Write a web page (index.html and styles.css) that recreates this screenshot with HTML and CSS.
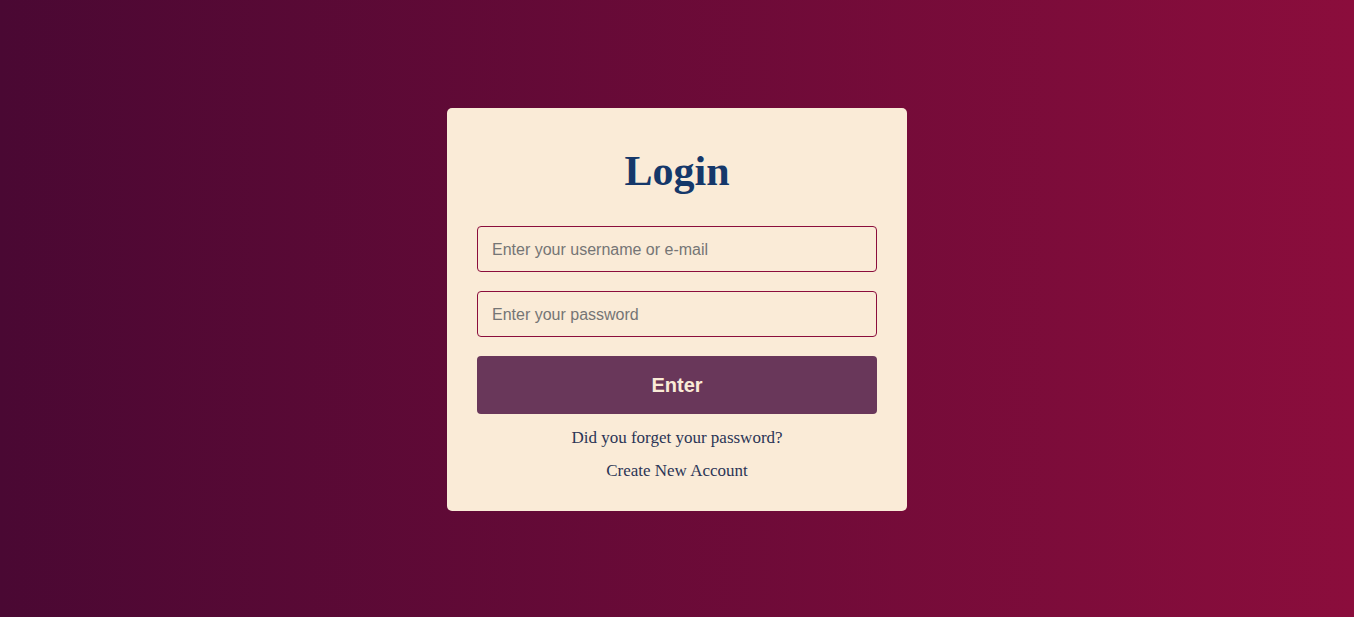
FILE: index.html
```html
<!DOCTYPE html>
<html lang="en">
<head>
<meta charset="utf-8">
<title>Login</title>
<link rel="stylesheet" href="styles.css">
</head>
<body>
<main class="page">
  <form class="card">
    <h1 class="title">Login</h1>
    <input class="field" type="text" placeholder="Enter your username or e-mail">
    <input class="field" type="password" placeholder="Enter your password">
    <button class="btn" type="button">Enter</button>
    <div class="links">
      <a class="link" href="#">Did you forget your password?</a>
      <a class="link" href="#">Create New Account</a>
    </div>
  </form>
</main>
</body>
</html>
```
FILE: styles.css
```css
html, body {
  margin: 0;
  height: 100%;
}
body {
  background: linear-gradient(90deg, #4a0833 0%, #8b0d3c 100%);
  font-family: "Liberation Serif", "Times New Roman", serif;
}
.page {
  height: 100%;
  display: flex;
  align-items: center;
  justify-content: center;
}
.card {
  width: 400px;
  padding: 30px 30px 28px;
  background: #faebd7;
  border-radius: 5px;
  display: flex;
  flex-direction: column;
  margin-top: 1px;
}
.title {
  margin: 7px 0 28px;
  text-align: center;
  font-size: 42px;
  line-height: 53px;
  font-weight: bold;
  color: #15386a;
}
.field {
  box-sizing: border-box;
  height: 46px;
  width: 100%;
  margin: 0 0 19px;
  padding: 2px 14px 0;
  border: 1px solid #8b0d3c;
  border-radius: 4px;
  background: #faebd7;
  font-family: "Liberation Sans", Arial, sans-serif;
  font-size: 16px;
  color: #333;
  outline: none;
}
.field::placeholder {
  color: #757575;
}
.btn {
  height: 58px;
  width: 100%;
  padding: 2px 0 0;
  border: none;
  border-radius: 4px;
  background: #69375a;
  color: #faebd7;
  font-family: "Liberation Sans", Arial, sans-serif;
  font-size: 20px;
  font-weight: bold;
  cursor: pointer;
}
.links {
  margin-top: 12px;
  display: flex;
  flex-direction: column;
  align-items: center;
  gap: 9px;
}
.link {
  font-size: 17px;
  line-height: 24px;
  color: #2b3556;
  text-decoration: none;
}
```
